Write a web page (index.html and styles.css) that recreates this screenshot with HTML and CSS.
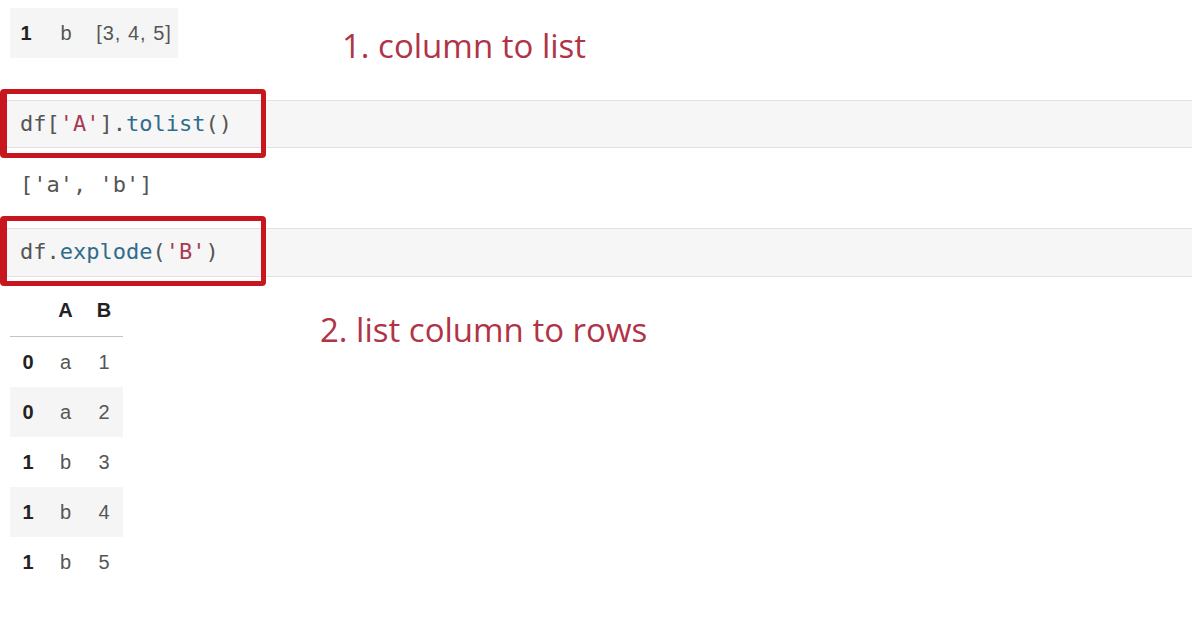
FILE: index.html
```html
<!DOCTYPE html>
<html>
<head>
<meta charset="utf-8">
<link rel="stylesheet" href="styles.css">
</head>
<body>
<div class="page">
  <section class="top">
    <div class="top-row"><span class="idx">1</span><span>b</span><span class="list">[3, 4, 5]</span></div>
    <p class="note note-1">1. column to list</p>
  </section>

  <div class="cell cell-1">
    <pre class="code">df[<span class="str">'A'</span>].<span class="fn">tolist</span>()</pre>
    <div class="highlight"></div>
  </div>

  <pre class="output">['a', 'b']</pre>

  <div class="cell cell-2">
    <pre class="code">df.<span class="fn">explode</span>(<span class="str">'B'</span>)</pre>
    <div class="highlight"></div>
  </div>

  <section class="bottom">
    <div class="df">
      <div class="df-r df-head"><span></span><span>A</span><span>B</span></div>
      <div class="df-r"><span class="idx">0</span><span>a</span><span>1</span></div>
      <div class="df-r stripe"><span class="idx">0</span><span>a</span><span>2</span></div>
      <div class="df-r"><span class="idx">1</span><span>b</span><span>3</span></div>
      <div class="df-r stripe"><span class="idx">1</span><span>b</span><span>4</span></div>
      <div class="df-r"><span class="idx">1</span><span>b</span><span>5</span></div>
    </div>
    <p class="note note-2">2. list column to rows</p>
  </section>
</div>
</body>
</html>
```

FILE: styles.css
```css
html, body {
  margin: 0;
  padding: 0;
  background: #ffffff;
}

.page {
  width: 1196px;
  height: 628px;
  overflow: hidden;
  font-family: "Liberation Sans", Arial, sans-serif;
}

.top {
  display: flex;
  align-items: flex-start;
  padding-top: 8px;
  height: 58px;
}

.top-row {
  display: grid;
  grid-template-columns: 32px 48px 88px;
  align-items: center;
  margin-left: 10px;
  height: 50px;
  background: #f5f5f5;
  font-size: 20px;
  color: #555;
  text-align: center;
}

.list {
  letter-spacing: 1px;
}

.idx {
  font-weight: bold;
  color: #222;
}

.note {
  margin: 0;
  font-family: "Open Sans", "Noto Sans", sans-serif;
  font-size: 33px;
  line-height: 45px;
  color: #b03446;
  white-space: nowrap;
}

.note-1 {
  margin-left: 164px;
  margin-top: 15px;
}

.cell {
  position: relative;
  box-sizing: border-box;
  width: 1192px;
  height: 48px;
  margin-top: 34px;
  background: #f6f6f6;
  border-top: 1px solid #e2e2e2;
  border-bottom: 1px solid #e2e2e2;
}

.cell-2 {
  margin-top: 0;
  height: 49px;
}

.code,
.output {
  margin: 0;
  padding-left: 20px;
  font-family: "DejaVu Sans Mono", "Liberation Mono", monospace;
  font-size: 22px;
  color: #555;
}

.code {
  line-height: 46px;
}

.str {
  color: #a83a52;
}

.fn {
  color: #2f6c8c;
}

.highlight {
  position: absolute;
  left: 0;
  top: -12px;
  width: 266px;
  height: 69px;
  box-sizing: border-box;
  border: 5px solid #c8161e;
  border-left-width: 7px;
  border-radius: 4px;
}

.cell-2 .highlight {
  top: -13px;
  height: 70px;
}

.output {
  box-sizing: border-box;
  height: 80px;
  padding-top: 17px;
  line-height: 40px;
}

.bottom {
  display: flex;
  align-items: flex-start;
}

.df {
  display: flex;
  flex-direction: column;
  margin-left: 10px;
  font-size: 20px;
  color: #555;
}

.df-r {
  display: grid;
  grid-template-columns: 36px 39px 38px;
  align-items: center;
  height: 50px;
  text-align: center;
}

.df-head {
  box-sizing: border-box;
  height: 60px;
  align-items: end;
  padding-bottom: 14px;
  line-height: 24px;
  border-bottom: 1px solid #c4c4c4;
  font-weight: bold;
  color: #222;
}

.stripe {
  background: #f5f5f5;
}

.note-2 {
  margin-left: 197px;
  margin-top: 30px;
}
```
